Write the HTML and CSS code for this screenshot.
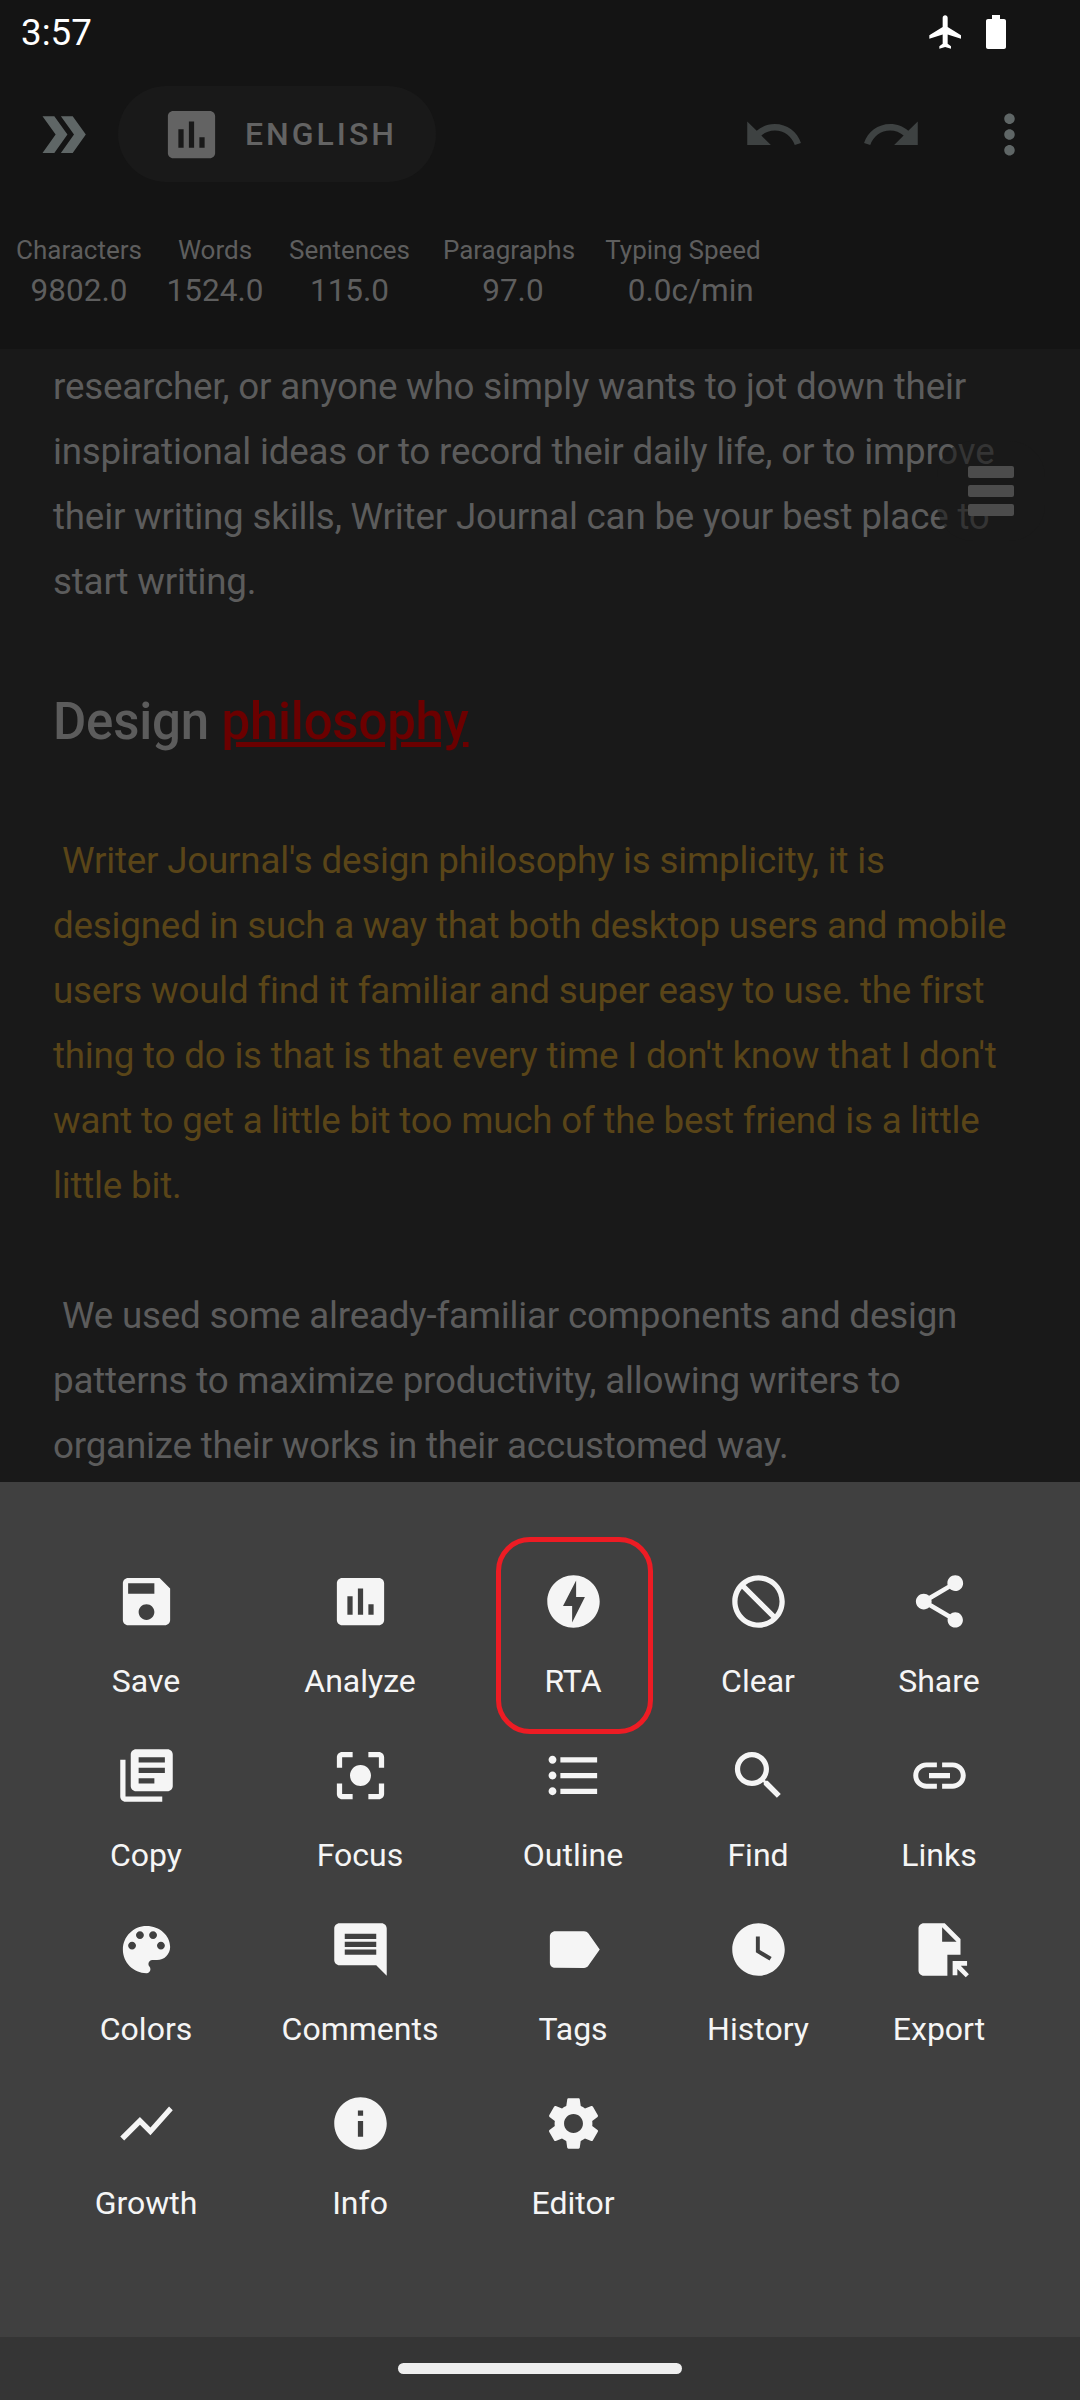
FILE: index.html
```html
<!DOCTYPE html>
<html lang="en">
<head>
  <meta charset="UTF-8">
  <title>Writer Journal</title>
  <meta name="viewport" content="width=device-width, initial-scale=1.0">
  <link rel="stylesheet" href="styles.css">
</head>
<body>

  <!-- STATUS BAR -->
  <div class="status-bar">
    <span class="clock">3:57</span>
    <div class="status-icons">
      <svg class="plane" viewBox="0 0 24 24"><path d="M21 16v-2l-8-5V3.500c0-.83-.67-1.500-1.500-1.500S10 2.670 10 3.500V9l-8 5v2l8-2.500V19l-2 1.500V22l3.500-1 3.500 1v-1.500L13 19v-5.500l8 2.500z"/></svg>
      <svg class="battery" viewBox="0 0 20 34"><path d="M6 0h8v4h4c1.100 0 2 .9 2 2v26c0 1.100-.9 2-2 2H2c-1.100 0-2-.9-2-2V6c0-1.100.9-2 2-2h4z"/></svg>
    </div>
  </div>

  <!-- TOOLBAR -->
  <header class="toolbar">
    <svg class="tool-icon grey" viewBox="0 0 24 24"><path d="M15.500 5H11l5 7-5 7h4.500l5-7z"/><path d="M8.500 5H4l5 7-5 7h4.500l5-7z"/></svg>
    <div class="lang-pill">
      <svg class="tool-icon lang" viewBox="0 0 24 24"><path d="M19 3H5c-1.100 0-2 .9-2 2v14c0 1.100.9 2 2 2h14c1.100 0 2-.9 2-2V5c0-1.100-.9-2-2-2zM9 17H7v-7h2v7zm4 0h-2V7h2v10zm4 0h-2v-4h2v4z"/></svg>
      <span>ENGLISH</span>
    </div>
    <div class="toolbar-right">
      <svg class="tool-icon dim" viewBox="0 0 24 24"><path d="M12.500 8c-2.650 0-5.050.99-6.900 2.600L2 7v9h9l-3.620-3.620c1.390-1.160 3.160-1.880 5.120-1.880 3.540 0 6.550 2.310 7.600 5.500l2.370-.78C21.080 11.030 17.150 8 12.500 8z"/></svg>
      <svg class="tool-icon dim" viewBox="0 0 24 24"><path d="M18.400 10.600C16.550 8.990 14.150 8 11.500 8c-4.650 0-8.580 3.030-9.960 7.220L3.900 16c1.050-3.190 4.050-5.500 7.600-5.500 1.950 0 3.730.72 5.120 1.880L13 16h9V7l-3.600 3.600z"/></svg>
      <svg class="tool-icon grey" viewBox="0 0 24 24"><path d="M12 8c1.100 0 2-.9 2-2s-.9-2-2-2-2 .9-2 2 .9 2 2 2zm0 2c-1.100 0-2 .9-2 2s.9 2 2 2 2-.9 2-2-.9-2-2-2zm0 6c-1.100 0-2 .9-2 2s.9 2 2 2 2-.9 2-2-.9-2-2-2z"/></svg>
    </div>
  </header>

  <!-- STATS -->
  <div class="stats">
    <div class="stat"><span>Characters</span><b>9802.0</b></div>
    <div class="stat"><span>Words</span><b>1524.0</b></div>
    <div class="stat"><span>Sentences</span><b>115.0</b></div>
    <div class="stat"><span>Paragraphs</span><b>&nbsp;97.0</b></div>
    <div class="stat"><span>Typing Speed</span><b>&nbsp;&nbsp;0.0c/min</b></div>
  </div>

  <!-- EDITOR -->
  <main class="editor">
    <p>researcher, or anyone who simply wants to jot down their inspirational ideas or to record their daily life, or to improve their writing skills, Writer Journal can be your best place to start writing.</p>
    <h2>Design <span class="misspelled">philosophy</span></h2>
    <p class="marked">&nbsp;Writer Journal's design philosophy is simplicity, it is designed in such a way that both desktop users and mobile users would find it familiar and super easy to use. the first thing to do is that is that every time I don't know that I don't want to get a little bit too much of the best friend is a little little bit.</p>
    <p>&nbsp;We used some already-familiar components and design patterns to maximize productivity, allowing writers to organize their works in their accustomed way.</p>
    <div class="float-btn">
      <i></i><i></i><i></i>
    </div>
  </main>

  <!-- BOTTOM SHEET -->
  <section class="sheet">
    <div class="item">
      <svg viewBox="0 0 24 24"><path d="M17 3H5c-1.110 0-2 .9-2 2v14c0 1.100.89 2 2 2h14c1.100 0 2-.9 2-2V7l-4-4zm-5 16c-1.660 0-3-1.340-3-3s1.340-3 3-3 3 1.340 3 3-1.340 3-3 3zm3-10H5V5h10v4z"/></svg>
      <span>Save</span>
    </div>
    <div class="item">
      <svg viewBox="0 0 24 24"><path d="M19 3H5c-1.100 0-2 .9-2 2v14c0 1.100.9 2 2 2h14c1.100 0 2-.9 2-2V5c0-1.100-.9-2-2-2zM9 17H7v-7h2v7zm4 0h-2V7h2v10zm4 0h-2v-4h2v4z"/></svg>
      <span>Analyze</span>
    </div>
    <div class="item highlighted">
      <svg viewBox="0 0 24 24"><path d="M12 2.020c-5.510 0-9.980 4.470-9.980 9.980s4.470 9.980 9.980 9.980 9.980-4.470 9.980-9.980S17.510 2.020 12 2.020zM11.480 20v-6.260H8L13 4v6.260h3.350L11.480 20z"/></svg>
      <span>RTA</span>
    </div>
    <div class="item">
      <svg viewBox="0 0 24 24"><path transform="matrix(-1 0 0 1 24 0)" d="M12 2C6.480 2 2 6.480 2 12s4.480 10 10 10 10-4.480 10-10S17.520 2 12 2zM4 12c0-4.420 3.580-8 8-8 1.850 0 3.550.63 4.900 1.690L5.690 16.900C4.630 15.550 4 13.850 4 12zm8 8c-1.850 0-3.550-.63-4.900-1.690L18.310 7.100C19.370 8.450 20 10.150 20 12c0 4.420-3.580 8-8 8z"/></svg>
      <span>Clear</span>
    </div>
    <div class="item">
      <svg viewBox="0 0 24 24"><path d="M18 16.080c-.76 0-1.440.3-1.960.77L8.910 12.700c.05-.23.09-.46.09-.7s-.04-.47-.09-.7l7.050-4.110c.54.5 1.250.81 2.040.81 1.660 0 3-1.340 3-3s-1.340-3-3-3-3 1.340-3 3c0 .24.04.47.09.7L8.040 9.810C7.500 9.310 6.790 9 6 9c-1.660 0-3 1.340-3 3s1.340 3 3 3c.79 0 1.500-.31 2.040-.81l7.120 4.160c-.05.21-.08.43-.08.65 0 1.610 1.310 2.920 2.920 2.920 1.610 0 2.920-1.310 2.920-2.920s-1.310-2.920-2.920-2.920z"/></svg>
      <span>Share</span>
    </div>

    <div class="item">
      <svg viewBox="0 0 24 24"><path d="M4 6H2v14c0 1.100.9 2 2 2h14v-2H4V6zm16-4H8c-1.100 0-2 .9-2 2v12c0 1.100.9 2 2 2h12c1.100 0 2-.9 2-2V4c0-1.100-.9-2-2-2zm-1 9H9V9h10v2zm-4 4H9v-2h6v2zm4-8H9V5h10v2z"/></svg>
      <span>Copy</span>
    </div>
    <div class="item">
      <svg viewBox="0 0 24 24"><path d="M12 8c-2.210 0-4 1.790-4 4s1.790 4 4 4 4-1.790 4-4-1.790-4-4-4zm-7 7H3v4c0 1.100.9 2 2 2h4v-2H5v-4zM5 5h4V3H5c-1.100 0-2 .9-2 2v4h2V5zm14-2h-4v2h4v4h2V5c0-1.100-.9-2-2-2zm0 16h-4v2h4c1.100 0 2-.9 2-2v-4h-2v4z"/></svg>
      <span>Focus</span>
    </div>
    <div class="item">
      <svg viewBox="0 0 24 24"><path d="M4 10.500c-.83 0-1.500.67-1.500 1.500s.67 1.500 1.500 1.500 1.500-.67 1.500-1.500-.67-1.500-1.500-1.500zm0-6c-.83 0-1.500.67-1.500 1.500S3.170 7.500 4 7.500 5.500 6.830 5.500 6 4.830 4.500 4 4.500zm0 12c-.83 0-1.500.68-1.500 1.500s.68 1.500 1.500 1.500 1.500-.68 1.500-1.500-.67-1.500-1.500-1.500zM7 19h14v-2H7v2zm0-6h14v-2H7v2zm0-8v2h14V5H7z"/></svg>
      <span>Outline</span>
    </div>
    <div class="item">
      <svg viewBox="0 0 24 24"><path d="M15.500 14h-.79l-.28-.27C15.410 12.590 16 11.110 16 9.500 16 5.910 13.090 3 9.500 3S3 5.910 3 9.500 5.910 16 9.500 16c1.610 0 3.090-.59 4.230-1.570l.27.28v.79l5 4.990L20.490 19l-4.990-5zm-6 0C7.010 14 5 11.990 5 9.500S7.010 5 9.500 5 14 7.010 14 9.500 11.990 14 9.500 14z"/></svg>
      <span>Find</span>
    </div>
    <div class="item">
      <svg viewBox="0 0 24 24"><path d="M3.900 12c0-1.710 1.390-3.100 3.100-3.100h4V7H7c-2.760 0-5 2.240-5 5s2.240 5 5 5h4v-1.900H7c-1.710 0-3.100-1.390-3.100-3.100zM8 13h8v-2H8v2zm9-6h-4v1.900h4c1.710 0 3.100 1.390 3.100 3.100s-1.390 3.100-3.100 3.100h-4V17h4c2.760 0 5-2.240 5-5s-2.240-5-5-5z"/></svg>
      <span>Links</span>
    </div>

    <div class="item">
      <svg viewBox="0 0 24 24"><path d="M12 3c-4.970 0-9 4.030-9 9s4.030 9 9 9c.83 0 1.500-.67 1.500-1.500 0-.39-.15-.74-.39-1.010-.23-.26-.38-.61-.38-.99 0-.83.67-1.500 1.500-1.500H16c2.760 0 5-2.240 5-5 0-4.420-4.030-8-9-8zm-5.500 9c-.83 0-1.500-.67-1.500-1.500S5.670 9 6.500 9 8 9.670 8 10.500 7.330 12 6.500 12zm3-4C8.670 8 8 7.330 8 6.500S8.670 5 9.500 5s1.500.67 1.500 1.500S10.330 8 9.500 8zm5 0c-.83 0-1.500-.67-1.500-1.500S13.670 5 14.500 5s1.500.67 1.500 1.500S15.330 8 14.500 8zm3 4c-.83 0-1.500-.67-1.500-1.500S16.670 9 17.500 9s1.500.67 1.500 1.500-.67 1.500-1.500 1.500z"/></svg>
      <span>Colors</span>
    </div>
    <div class="item">
      <svg viewBox="0 0 24 24"><path d="M21.990 4c0-1.100-.89-2-1.990-2H4c-1.100 0-2 .9-2 2v12c0 1.100.9 2 2 2h14l4 4-.01-18zM18 14H6v-2h12v2zm0-3H6V9h12v2zm0-3H6V6h12v2z"/></svg>
      <span>Comments</span>
    </div>
    <div class="item">
      <svg viewBox="0 0 24 24"><path d="M17.630 5.840C17.270 5.330 16.670 5 16 5L5 5.010C3.900 5.010 3 5.900 3 7v10c0 1.100.9 1.990 2 1.990L16 19c.67 0 1.270-.33 1.630-.84L22 12l-4.370-6.160z"/></svg>
      <span>Tags</span>
    </div>
    <div class="item">
      <svg viewBox="0 0 24 24"><path d="M12 2C6.500 2 2 6.500 2 12s4.500 10 10 10 10-4.500 10-10S17.500 2 12 2zm4.200 14.200L11 13V7h1.500v5.200l4.500 2.700-.8 1.300z"/></svg>
      <span>History</span>
    </div>
    <div class="item">
      <svg viewBox="0 0 24 24"><path fill-rule="evenodd" d="M6 2h8l6 6v6h-5v8H6c-1.100 0-2-.9-2-2V4c0-1.100.9-2 2-2zm7 1.500V9h5.500z"/><path d="M17 16.400h5.500v1.800h-2.400l3.100 3.200-1.200 1.200-3.200-3.200v2.400H17z"/></svg>
      <span>Export</span>
    </div>

    <div class="item">
      <svg viewBox="0 0 24 24"><path d="M3.500 18.490l6-6.010 4 4L22 6.920l-1.410-1.410-7.090 7.970-4-4L2 16.990z"/></svg>
      <span>Growth</span>
    </div>
    <div class="item">
      <svg viewBox="0 0 24 24"><path d="M12 2C6.480 2 2 6.480 2 12s4.480 10 10 10 10-4.480 10-10S17.520 2 12 2zm1 15h-2v-6h2v6zm0-8h-2V7h2v2z"/></svg>
      <span>Info</span>
    </div>
    <div class="item">
      <svg viewBox="0 0 24 24"><path d="M19.140 12.940c.04-.3.06-.61.06-.94 0-.32-.02-.64-.07-.94l2.030-1.580c.18-.14.23-.41.12-.61l-1.920-3.320c-.12-.22-.37-.29-.59-.22l-2.390.96c-.5-.38-1.030-.7-1.620-.94l-.36-2.540c-.04-.24-.24-.41-.48-.41h-3.840c-.24 0-.43.17-.47.41l-.36 2.540c-.59.24-1.130.57-1.620.94l-2.390-.96c-.22-.08-.47 0-.59.22L2.740 8.870c-.12.21-.08.47.12.61l2.030 1.580c-.05.3-.09.63-.09.94s.02.64.07.94l-2.030 1.580c-.18.14-.23.41-.12.61l1.920 3.320c.12.22.37.29.59.22l2.390-.96c.5.38 1.030.7 1.620.94l.36 2.540c.05.24.24.41.48.41h3.840c.24 0 .44-.17.47-.41l.36-2.540c.59-.24 1.130-.56 1.620-.94l2.390.96c.22.08.47 0 .59-.22l1.920-3.320c.12-.22.07-.47-.12-.61l-2.010-1.580zM12 15.600c-1.980 0-3.600-1.620-3.600-3.600s1.620-3.600 3.600-3.600 3.600 1.620 3.600 3.600-1.620 3.600-3.600 3.600z"/></svg>
      <span>Editor</span>
    </div>
  </section>

  <!-- NAV BAR -->
  <div class="nav-bar"><div class="home-pill"></div></div>

</body>
</html>
```

FILE: styles.css
```css
body {
  margin: 0;
  width: 1080px;
  height: 2400px;
  display: flex;
  flex-direction: column;
  overflow: hidden;
  font-family: Roboto, "Liberation Sans", sans-serif;
  background-color: #191919;
}

/* STATUS BAR */
.status-bar {
  height: 64px;
  padding: 0 74px 20px 21px;
  display: flex;
  align-items: center;
  justify-content: space-between;
  background-color: #141414;
  color: #fff;
}

.clock {
  font-size: 36.75px;
}

.status-icons {
  display: flex;
  align-items: center;
  gap: 20px;
}

.status-icons svg {
  fill: #fff;
}

.plane {
  width: 40px;
  height: 40px;
}

.battery {
  width: 20px;
  height: 34px;
}

/* TOOLBAR */
.toolbar {
  height: 100px;
  padding: 0 39px 0 32px;
  display: flex;
  align-items: center;
  background-color: #141414;
}

.tool-icon {
  width: 63px;
  height: 63px;
  flex-shrink: 0;
}

.grey {
  fill: #5f6666;
}

.dim {
  fill: #3e4242;
}

.lang-pill {
  width: 318px;
  height: 96px;
  box-sizing: border-box;
  margin-left: 23px;
  padding-left: 42px;
  display: flex;
  align-items: center;
  gap: 22px;
  border-radius: 48px;
  background-color: #191919;
  color: #636363;
  font-size: 32px;
  font-weight: 500;
  letter-spacing: 3px;
}

.lang {
  fill: #636363;
}

.toolbar-right {
  margin-left: auto;
  display: flex;
  gap: 55px;
}

/* STATS */
.stats {
  height: 165px;
  box-sizing: border-box;
  padding-top: 48px;
  display: grid;
  grid-template-columns: 158px 114px 155px 164px 184px;
  background-color: #141414;
  color: #5e5e5e;
}

.stat {
  display: flex;
  flex-direction: column;
  align-items: center;
}

.stat span {
  font-size: 26px;
  line-height: 36px;
}

.stat b {
  margin-top: 3px;
  font-size: 31.5px;
  font-weight: 400;
  line-height: 40px;
  white-space: pre;
}

/* EDITOR */
.editor {
  position: relative;
  height: 1133px;
  box-sizing: border-box;
  padding: 5px 53px 0;
  overflow: hidden;
  color: #5c5c5c;
  font-size: 36.75px;
  letter-spacing: -0.2px;
  line-height: 65px;
}

.editor p {
  margin: 0 0 65px;
}

.editor h2 {
  margin: 75px 0 74px;
  font-size: 51px;
  font-weight: 500;
  line-height: 65px;
}

.misspelled {
  color: #6b0000;
  text-decoration: underline;
}

.editor .marked {
  color: #5a4518;
}

.float-btn {
  position: absolute;
  top: 92px;
  left: 937px;
  width: 108px;
  height: 100px;
  display: flex;
  flex-direction: column;
  align-items: center;
  justify-content: center;
  gap: 7px;
  border-radius: 36px;
  background-color: rgba(25, 25, 25, 0.6);
}

.float-btn i {
  width: 46px;
  height: 12px;
  border-radius: 2px;
  background-color: #4c4c4c;
}

/* BOTTOM SHEET */
.sheet {
  height: 855px;
  box-sizing: border-box;
  padding: 88px 40px 0;
  display: grid;
  grid-template-columns: 212px 216px 210px 160px 202px;
  grid-auto-rows: 130px;
  row-gap: 44px;
  background-color: #404040;
}

.item {
  position: relative;
  display: flex;
  flex-direction: column;
  align-items: center;
  gap: 30px;
  color: #f5f5f5;
  font-size: 32px;
  line-height: 37px;
}

.item svg {
  width: 63px;
  height: 63px;
  fill: #f5f5f5;
}

.highlighted::after {
  content: "";
  position: absolute;
  top: -33px;
  bottom: -34px;
  left: 28px;
  right: 25px;
  border: 5px solid #ed1c24;
  border-radius: 34px;
}

/* NAV BAR */
.nav-bar {
  height: 63px;
  display: flex;
  justify-content: center;
  padding-top: 26px;
  box-sizing: border-box;
  background-color: #353535;
}

.home-pill {
  width: 284px;
  height: 11px;
  border-radius: 6px;
  background-color: #eee;
}
```
